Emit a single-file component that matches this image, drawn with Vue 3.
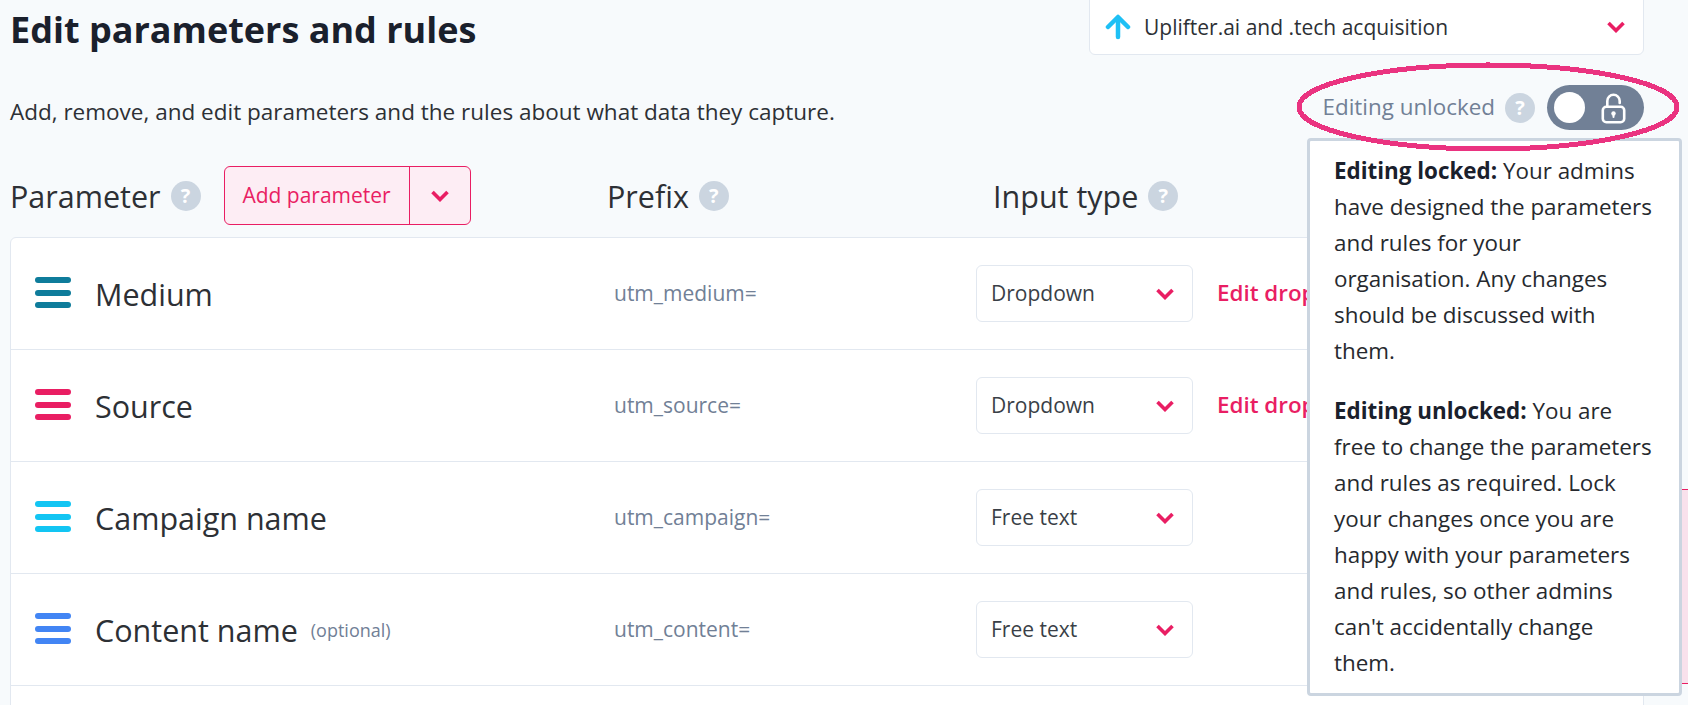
<script setup>
const rows = [
  { name: 'Medium', color: '#0e7c9b', prefix: 'utm_medium=', type: 'Dropdown', edit: true },
  { name: 'Source', color: '#e91e63', prefix: 'utm_source=', type: 'Dropdown', edit: true },
  { name: 'Campaign name', color: '#12c5f3', prefix: 'utm_campaign=', type: 'Free text' },
  { name: 'Content name', color: '#4285f4', prefix: 'utm_content=', type: 'Free text', optional: true },
]
</script>

<template>
  <div class="page">
    <header class="top">
      <div class="intro">
        <h1>Edit parameters and rules</h1>
        <p>Add, remove, and edit parameters and the rules about what data they capture.</p>
      </div>
      <div class="controls">
        <div class="account">
          <svg class="arrow" viewBox="0 0 26 26" width="26" height="26" fill="none" stroke="#1ec0f5" stroke-width="4.5" stroke-linecap="round" stroke-linejoin="round">
            <path d="M13 23V4" />
            <path d="M3 13L13 3l10 10" />
          </svg>
          <span class="account-name">Uplifter.ai and .tech acquisition</span>
          <svg class="chev" viewBox="0 0 18 12" width="18" height="12" fill="none" stroke="#e91e63" stroke-width="3.6">
            <path d="M1.5 2L9 9.5 16.5 2" />
          </svg>
        </div>
        <div class="lock-row">
          <span class="lock-label">Editing unlocked</span>
          <span class="help">?</span>
          <span class="toggle">
            <span class="knob"></span>
            <svg viewBox="0 0 26 32" width="26" height="32" fill="none" stroke="#fff" stroke-width="2.6">
              <rect x="2.8" y="14.8" width="21.4" height="15.4" rx="3.5" />
              <path d="M7.3 14.8V9a6.2 6.2 0 0 1 12.4 0V11" stroke-linecap="round" />
              <circle cx="13.5" cy="21.5" r="2.2" fill="#fff" stroke="none" />
              <path d="M13.5 21.5v3.5" stroke-width="2" stroke-linecap="round" />
            </svg>
          </span>
        </div>
      </div>
    </header>

    <div class="heads">
      <div class="head col-param">
        <span>Parameter</span>
        <span class="help">?</span>
        <div class="add">
          <span class="add-label">Add parameter</span>
          <span class="add-caret">
            <svg viewBox="0 0 18 12" width="18" height="12" fill="none" stroke="#e91e63" stroke-width="3.6">
              <path d="M1.5 2L9 9.5 16.5 2" />
            </svg>
          </span>
        </div>
      </div>
      <div class="head col-prefix">
        <span>Prefix</span>
        <span class="help">?</span>
      </div>
      <div class="head">
        <span>Input type</span>
        <span class="help">?</span>
      </div>
    </div>

    <section class="card">
      <div v-for="row in rows" :key="row.name" class="row">
        <div class="cell-name">
          <span class="bars">
            <i :style="{ background: row.color }"></i>
            <i :style="{ background: row.color }"></i>
            <i :style="{ background: row.color }"></i>
          </span>
          <span class="name">{{ row.name }}</span>
          <span v-if="row.optional" class="optional">(optional)</span>
        </div>
        <div class="cell-prefix">{{ row.prefix }}</div>
        <div class="select">
          <span class="select-text">{{ row.type }}</span>
          <svg viewBox="0 0 18 12" width="18" height="12" fill="none" stroke="#e91e63" stroke-width="3.6">
            <path d="M1.5 2L9 9.5 16.5 2" />
          </svg>
        </div>
        <span v-if="row.edit" class="edit">Edit dropdown values</span>
      </div>
    </section>

    <div class="rules-edge"></div>

    <aside class="pop">
      <p><b>Editing locked:</b> Your admins have designed the parameters and rules for your organisation. Any changes should be discussed with them.</p>
      <p><b>Editing unlocked:</b> You are free to change the parameters and rules as required. Lock your changes once you are happy with your parameters and rules, so other admins can't accidentally change them.</p>
    </aside>

    <svg class="ring" viewBox="0 0 392 100" width="392" height="100" fill="none" shape-rendering="crispEdges">
      <ellipse cx="196" cy="50" rx="189" ry="42" stroke="#ea3380" stroke-width="5" />
    </svg>
  </div>
</template>

<style>
html, body { margin: 0; height: 705px; overflow: hidden; background: #f7fafc; }
</style>

<style scoped>
.page {
  position: relative;
  width: 1688px;
  height: 705px;
  overflow: hidden;
  background: #f7fafc;
  font-family: "Open Sans", "Noto Sans", sans-serif;
  color: #2d3035;
  box-sizing: border-box;
  padding-left: 10px;
}
.top { display: flex; justify-content: space-between; width: 1634px; height: 166px; }
.intro h1 { margin: 8px 0 0; font-size: 36px; line-height: 44px; font-weight: 700; color: #1a202c; }
.intro p { margin: 44px 0 0; font-size: 22.5px; line-height: 32px; color: #2d3035; }
.controls { display: flex; flex-direction: column; align-items: flex-end; }
.account {
  box-sizing: border-box;
  width: 555px;
  height: 65px;
  margin-top: -10px;
  padding: 8px 18px 0 15px;
  display: flex;
  align-items: center;
  background: #fff;
  border: 1px solid #e2e8f0;
  border-radius: 6px;
  font-size: 21px;
}
.account-name { margin-left: 13px; flex: 1; }
.lock-row { display: flex; align-items: center; margin-top: 30px; height: 45px; }
.lock-label { color: #718096; font-size: 22.4px; margin-right: 10px; padding-bottom: 2px; }
.help {
  flex: none;
  width: 30px;
  height: 30px;
  border-radius: 50%;
  background: #cbd5e0;
  color: #fff;
  font-weight: 700;
  font-size: 20px;
  line-height: 30px;
  text-align: center;
}
.toggle {
  margin-left: 12px;
  box-sizing: border-box;
  width: 97px;
  height: 45px;
  padding: 0 18px 0 7px;
  border-radius: 23px;
  background: #718096;
  display: flex;
  align-items: center;
  justify-content: space-between;
}
.knob { width: 31px; height: 31px; border-radius: 50%; background: #fff; }

.heads { display: flex; height: 71px; }
.head { display: flex; align-items: center; height: 59px; gap: 10px; font-size: 30.5px; }
.col-param { width: 597px; }
.col-prefix { width: 386px; }
.add {
  margin-left: 13px;
  display: flex;
  height: 59px;
  width: 247px;
  box-sizing: border-box;
  border: 1px solid #e91e63;
  border-radius: 6px;
  background: #fdedf4;
  color: #e91e63;
  font-size: 21px;
}
.add-label {
  box-sizing: border-box;
  width: 185px;
  padding-bottom: 2px;
  display: flex;
  align-items: center;
  justify-content: center;
  border-right: 1px solid #e91e63;
}
.add-caret { flex: 1; display: flex; align-items: center; justify-content: center; }

.card {
  width: 1634px;
  box-sizing: border-box;
  background: #fff;
  border: 1px solid #e2e8f0;
  border-radius: 6px 6px 0 0;
  height: 500px;
}
.row {
  display: flex;
  align-items: center;
  box-sizing: border-box;
  height: 112px;
  border-bottom: 1px solid #e2e8f0;
  padding-left: 24px;
}
.cell-name { width: 579px; display: flex; align-items: center; }
.bars { width: 36px; display: flex; flex-direction: column; gap: 6.5px; margin: 0 24px 2px 0; }
.bars i { display: block; height: 6px; border-radius: 3px; }
.name { font-size: 30.5px; line-height: 36px; }
.optional { margin-left: 13px; font-size: 18px; color: #718096; }
.cell-prefix { width: 362px; font-size: 21px; color: #718096; padding-bottom: 2px; }
.select {
  box-sizing: border-box;
  width: 217px;
  height: 57px;
  padding: 0 18px 0 14px;
  display: flex;
  align-items: center;
  justify-content: space-between;
  border: 1px solid #e2e8f0;
  border-radius: 6px;
  font-size: 21px;
  color: #3a3f47;
}
.select-text { padding-bottom: 2px; }
.edit { margin-left: 24px; padding-bottom: 2px; font-size: 22.4px; font-weight: 600; color: #e91e63; white-space: nowrap; }

.rules-edge {
  position: absolute;
  left: 1500px;
  top: 489px;
  width: 188px;
  height: 195px;
  box-sizing: border-box;
  background: #f9e1ec;
  border-top: 1px solid #e91e63;
  border-bottom: 1px solid #e91e63;
}
.pop {
  position: absolute;
  left: 1307px;
  top: 138px;
  width: 375px;
  height: 558px;
  box-sizing: border-box;
  padding: 12px 23px 0 24px;
  background: #fff;
  border: 3px solid #cbd5e0;
  border-radius: 4px;
  font-size: 22.4px;
  line-height: 36px;
  color: #26292e;
}
.pop p { margin: 0 0 24px; }
.pop b { color: #1a202c; font-weight: 700; }
.ring { position: absolute; left: 1292px; top: 57px; }
</style>
